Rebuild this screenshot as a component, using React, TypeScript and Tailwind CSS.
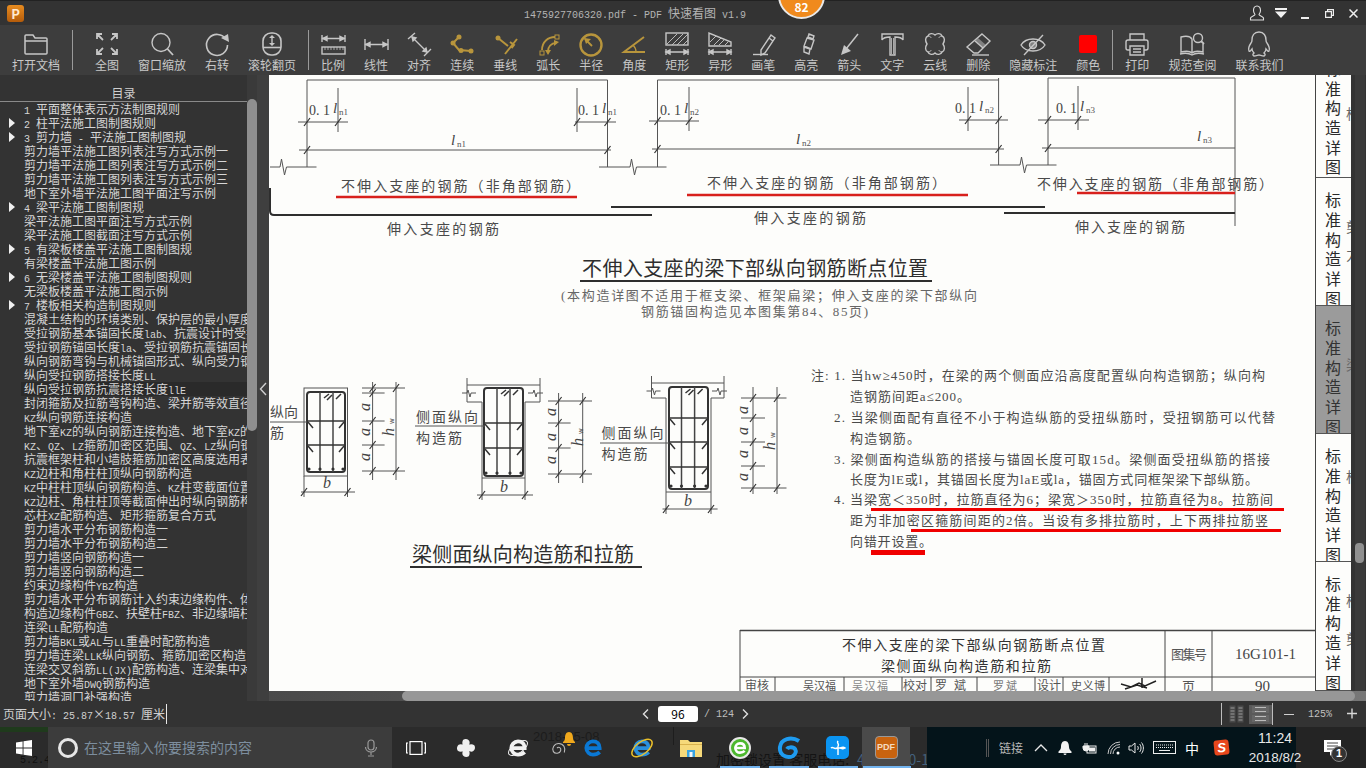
import React from 'react'

const isLatin = /^[\x20-\x7e]+$/

// 界面是 12px 中文 + 6px 宽的西文
const Mixed = ({ text }: { text: string }) => (
  <>
    {text.split(/([\x20-\x7e]+)/).map((s, i) =>
      isLatin.test(s) ? (
        <span key={i} className="font-['Liberation_Mono'] text-[10px]">
          {s}
        </span>
      ) : (
        s
      )
    )}
  </>
)

const Ico = ({ children, gold }: { children: React.ReactNode; gold?: boolean }) => (
  <svg
    viewBox="0 0 28 28"
    fill="none"
    stroke="currentColor"
    strokeWidth={1.4}
    className={`h-7 w-7 shrink-0 ${gold ? 'text-[#b8953c]' : 'text-[#c6c6c6]'}`}
  >
    {children}
  </svg>
)

// 图标比两个字宽，宽度只算文字
const Tool = ({ label, children }: { label: string; children: React.ReactNode }) => (
  <div className="flex flex-col items-center">
    <div className="flex h-7 w-0 justify-center">{children}</div>
    <span className="whitespace-nowrap text-[12px] leading-[13px] text-[#c8c8c8]">{label}</span>
  </div>
)

const Sep = ({ className }: { className: string }) => <div className={`h-10 w-px shrink-0 bg-[#9a9a9a] ${className}`} />

const DimBar = () => (
  <>
    <path d="M3 19v6M25 19v6M3 22h22" />
    <path d="M3 22l4-2v4zM25 22l-4-2v4z" fill="currentColor" />
  </>
)

const hatch = 'M4 14L14 4M9 15L20 4M14 15L25 4M20 15l5-5'

const viewTools = [
  {
    label: '全图',
    icon: (
      <Ico>
        <path strokeWidth={1.8} d="M10 10L4 4M4 9V4h5M18 10l6-6M19 4h5v5M10 18l-6 6M4 19v5h5M18 18l6 6M24 19v5h-5" />
      </Ico>
    ),
  },
  {
    label: '窗口缩放',
    icon: (
      <Ico>
        <circle cx="13" cy="12.5" r="9" />
        <path strokeWidth={1.8} d="M19.5 19l5.5 6" />
      </Ico>
    ),
  },
  {
    label: '右转',
    icon: (
      <Ico>
        <path strokeWidth={1.6} d="M23 9.5A10.5 10.5 0 1 0 24.5 15" />
        <path fill="currentColor" stroke="none" d="M18 8l7-4 1 8z" />
      </Ico>
    ),
  },
  {
    label: '滚轮翻页',
    icon: (
      <Ico>
        <rect x="5" y="3" width="18" height="22" rx="8" strokeWidth={1.6} />
        <path d="M5 17.5h18" strokeWidth={1.6} />
        <path d="M14 7v7" strokeWidth={1.4} />
        <path fill="currentColor" stroke="none" d="M14 5l3 3h-6zM14 16l3-3h-6z" />
      </Ico>
    ),
  },
]

const measureTools = [
  {
    label: '比例',
    icon: (
      <Ico>
        <path d="M3 5v7M26 5v7M3 8.500h23" />
        <path fill="currentColor" d="M4 8.500l4-2v4zM25 8.500l-4-2v4z" />
        <rect x="3" y="17" width="23" height="7" />
        <path d="M6 17v3M9 17v3M12 17v3M15 17v3M18 17v3M21 17v3M24 17v3" strokeWidth={0.8} />
      </Ico>
    ),
  },
  {
    label: '线性',
    icon: (
      <Ico>
        <path d="M3 9v11M26 9v11M3 14.500h23" />
        <path fill="currentColor" d="M4 14.500l4-2v4zM25 14.500l-4-2v4z" />
      </Ico>
    ),
  },
  {
    label: '对齐',
    icon: (
      <Ico>
        <path d="M3 9l7-6M19 26l7-7M7 7l15 15" />
        <path fill="currentColor" d="M7 7l4 1-3 3zM22 22l-4-1 3-3z" />
      </Ico>
    ),
  },
  {
    label: '连续',
    icon: (
      <Ico gold>
        <path strokeWidth={2} d="M11 7l-6 6 6 7 12 1" />
        <circle cx="11" cy="7" r="2.500" fill="currentColor" stroke="none" />
        <circle cx="5" cy="13" r="2.500" fill="currentColor" stroke="none" />
        <circle cx="13" cy="20.500" r="2.500" fill="currentColor" stroke="none" />
        <circle cx="23" cy="21" r="2.500" fill="currentColor" stroke="none" />
      </Ico>
    ),
  },
  {
    label: '垂线',
    icon: (
      <Ico gold>
        <path strokeWidth={2} d="M7 8l10 8M26 9L14 24M19 12l4 3-2.500 3" />
        <circle cx="7" cy="8" r="2.500" fill="currentColor" stroke="none" />
      </Ico>
    ),
  },
  {
    label: '弧长',
    icon: (
      <Ico gold>
        <path strokeWidth={1.8} d="M8 20C8 12 14 7 21 7M14 21c0-4 3-8 8-8" />
        <rect x="21" y="5" width="4" height="4" strokeWidth={1} />
        <rect x="6" y="21" width="4" height="4" strokeWidth={1} />
        <path fill="currentColor" stroke="none" d="M25 12l-5 4v-6zM11 20l6 0-3 5z" />
      </Ico>
    ),
  },
  {
    label: '半径',
    icon: (
      <Ico gold>
        <circle cx="14" cy="15" r="10.500" strokeWidth={2.400} />
        <path strokeWidth={1.8} d="M15 16L8 9" />
        <path fill="currentColor" stroke="none" d="M7 8l7 1-5 5z" />
      </Ico>
    ),
  },
  {
    label: '角度',
    icon: (
      <Ico gold>
        <path strokeWidth={2} d="M24 7L4 22h21" />
        <path strokeWidth={1.4} d="M13 15c2 2 3 4 3 7" />
      </Ico>
    ),
  },
  {
    label: '矩形',
    icon: (
      <Ico>
        <rect x="3" y="3" width="22" height="12" />
        <path d={hatch} strokeWidth={0.9} />
        <DimBar />
      </Ico>
    ),
  },
  {
    label: '异形',
    icon: (
      <Ico>
        <path d="M3 3v13h22v-4z" />
        <path d="M4 12l6-6M8 15l7-7M13 15l5-5M19 15l3-3" strokeWidth={0.9} />
        <DimBar />
      </Ico>
    ),
  },
  {
    label: '画笔',
    icon: (
      <Ico>
        <path d="M22 5l4 3-10 15-4 2v-5zM20 8l4 3" />
        <path d="M4 24.500h15" />
      </Ico>
    ),
  },
  {
    label: '高亮',
    icon: (
      <Ico>
        <path d="M17 4l5 2-1 3-5-2zM15 8l7 2-3 9-7-3zM12 17l6 2-1 5-5-2z" />
      </Ico>
    ),
  },
  {
    label: '箭头',
    icon: (
      <Ico>
        <path d="M23 4L11 19" strokeWidth={1.5} />
        <path fill="currentColor" stroke="none" d="M6 25l3-10 7 6z" />
      </Ico>
    ),
  },
  {
    label: '文字',
    icon: (
      <Ico>
        <path d="M4 4h21v6c-1-2-3-3-8-3v18h-5V7c-5 0-7 1-8 3z" />
        <path d="M13.500 8v16M15.500 8v16" strokeWidth={0.8} />
      </Ico>
    ),
  },
  {
    label: '云线',
    icon: (
      <Ico>
        <path d="M7 6c1-3 5-3 7-1 2-2 6-2 7 1 3 1 3 5 1 8 2 3 2 7-1 8-1 3-5 3-7 1-2 2-6 2-7-1-3-1-3-5-1-8-2-3-2-7 1-8z" />
        <path d="M7 6c2 0 3 1 3 2M21 6c-2 0-3 1-3 2M7 22c2 0 3-1 3-2M21 22c-2 0-3-1-3-2" strokeWidth={0.9} />
      </Ico>
    ),
  },
  {
    label: '删除',
    icon: (
      <Ico>
        <path d="M18 4l8 7-12 12-4 0-7-6z" />
        <path d="M11 11l8 7" />
        <path d="M14 8l8 7-3 3-8-7z" fill="currentColor" fillOpacity={0.5} stroke="none" />
        <path d="M8 25h17" />
      </Ico>
    ),
  },
  {
    label: '隐藏标注',
    icon: (
      <Ico>
        <path d="M2 15c5-8 19-8 24 0-5 8-19 8-24 0z" />
        <circle cx="14" cy="15" r="3.500" fill="currentColor" fillOpacity={0.5} />
        <path d="M24 5L5 25" />
      </Ico>
    ),
  },
  {
    label: '颜色',
    icon: (
      <svg viewBox="0 0 28 28" className="h-7 w-7 shrink-0">
        <rect x="5" y="5" width="18" height="18" rx="2" fill="#ff0000" />
      </svg>
    ),
  },
]

const helpTools = [
  {
    label: '打印',
    icon: (
      <Ico>
        <path d="M7 10V4h14v6" />
        <path d="M7 20H5a2 2 0 0 1-2-2v-6a2 2 0 0 1 2-2h18a2 2 0 0 1 2 2v6a2 2 0 0 1-2 2h-2" />
        <path d="M7 16h14v9H7zM10 19h8M10 22h8" />
      </Ico>
    ),
  },
  {
    label: '规范查阅',
    icon: (
      <Ico>
        <path d="M14 9c-2-3-7-3-11-2v15c4-1 9-1 11 1 2-2 7-2 11-1V14M14 9v14" />
        <path d="M2 24c4-1 9-1 12 1 3-2 8-2 12-1" />
        <circle cx="20" cy="8" r="4.500" />
        <path d="M23 11l3 3" strokeWidth={1.8} />
      </Ico>
    ),
  },
  {
    label: '联系我们',
    icon: (
      <Ico>
        <path d="M14 2c-5 0-7 4-7 8 0 2 0 2-1 3-2 3-3 6-2 8 1 1 2-1 3-2 0 2 1 3 2 4-1 1-2 2 0 3 2 0 4-1 5-1s3 1 5 1c2-1 1-2 0-3 1-1 2-2 2-4 1 1 2 3 3 2 1-2 0-5-2-8-1-1-1-1-1-3 0-4-2-8-7-8z" />
      </Ico>
    ),
  },
]

const tocRows: { t: string; arrow?: boolean; active?: boolean }[] = [
  { t: '1 平面整体表示方法制图规则' },
  { t: '2 柱平法施工图制图规则', arrow: true },
  { t: '3 剪力墙 - 平法施工图制图规', arrow: true },
  { t: '剪力墙平法施工图列表注写方式示例一' },
  { t: '剪力墙平法施工图列表注写方式示例二' },
  { t: '剪力墙平法施工图列表注写方式示例三' },
  { t: '地下室外墙平法施工图平面注写示例' },
  { t: '4 梁平法施工图制图规', arrow: true },
  { t: '梁平法施工图平面注写方式示例' },
  { t: '梁平法施工图截面注写方式示例' },
  { t: '5 有梁板楼盖平法施工图制图规', arrow: true },
  { t: '有梁楼盖平法施工图示例' },
  { t: '6 无梁楼盖平法施工图制图规则', arrow: true },
  { t: '无梁板楼盖平法施工图示例' },
  { t: '7 楼板相关构造制图规则', arrow: true },
  { t: '混凝土结构的环境类别、保护层的最小厚度' },
  { t: '受拉钢筋基本锚固长度lab、抗震设计时受拉钢筋' },
  { t: '受拉钢筋锚固长度la、受拉钢筋抗震锚固长度' },
  { t: '纵向钢筋弯钩与机械锚固形式、纵向受力钢筋' },
  { t: '纵向受拉钢筋搭接长度LL' },
  { t: '纵向受拉钢筋抗震搭接长度llE', active: true },
  { t: '封闭箍筋及拉筋弯钩构造、梁并筋等效直径' },
  { t: 'KZ纵向钢筋连接构造' },
  { t: '地下室KZ的纵向钢筋连接构造、地下室KZ的' },
  { t: 'KZ、QZ、LZ箍筋加密区范围、QZ、LZ纵向钢筋' },
  { t: '抗震框架柱和小墙肢箍筋加密区高度选用表' },
  { t: 'KZ边柱和角柱柱顶纵向钢筋构造' },
  { t: 'KZ中柱柱顶纵向钢筋构造、KZ柱变截面位置' },
  { t: 'KZ边柱、角柱柱顶等截面伸出时纵向钢筋构造' },
  { t: '芯柱XZ配筋构造、矩形箍筋复合方式' },
  { t: '剪力墙水平分布钢筋构造一' },
  { t: '剪力墙水平分布钢筋构造二' },
  { t: '剪力墙竖向钢筋构造一' },
  { t: '剪力墙竖向钢筋构造二' },
  { t: '约束边缘构件YBZ构造' },
  { t: '剪力墙水平分布钢筋计入约束边缘构件、体积' },
  { t: '构造边缘构件GBZ、扶壁柱FBZ、非边缘暗柱' },
  { t: '连梁LL配筋构造' },
  { t: '剪力墙BKL或AL与LL重叠时配筋构造' },
  { t: '剪力墙连梁LLK纵向钢筋、箍筋加密区构造' },
  { t: '连梁交叉斜筋LL(JX)配筋构造、连梁集中对' },
  { t: '地下室外墙DWQ钢筋构造' },
  { t: '剪力墙洞口补强构造' },
]

/* ---------- 扫描页（图纸）---------- */

const PAGE_FONT = "'Liberation Serif','Noto Sans CJK SC',serif"

const T = ({
  x,
  y,
  w,
  s = 13,
  fill = '#4a4a4a',
  children,
}: {
  x: number
  y: number
  w?: number
  s?: number
  fill?: string
  children: React.ReactNode
}) => (
  <text x={x} y={y + s * 0.36} fontSize={s} fill={fill} stroke="none" fontFamily={PAGE_FONT} textLength={w} lengthAdjust={w ? 'spacing' : undefined}>
    {children}
  </text>
)

const I = ({ x, y, s = 14, rot, children }: { x: number; y: number; s?: number; rot?: boolean; children: React.ReactNode }) => (
  <text
    x={x}
    y={y}
    fontSize={s}
    fill="#444"
    stroke="none"
    fontStyle="italic"
    textAnchor="middle"
    dominantBaseline="middle"
    fontFamily="'Liberation Serif',serif"
    transform={rot ? `rotate(-90 ${x} ${y})` : undefined}
  >
    {children}
  </text>
)

const Tick = ({ x, y }: { x: number; y: number }) => <line x1={x - 3} y1={y + 4} x2={x + 3} y2={y - 4} stroke="#333" strokeWidth={1.2} />

const Ln = ({ x, y, sub }: { x: number; y: number; sub: string }) => (
  <>
    <I x={x} y={y} s={15}>
      l
    </I>
    <text x={x + 4} y={y + 5} fontSize={9} fill="#555" fontFamily="'Liberation Serif',serif">
      {sub}
    </text>
  </>
)

const PointOne = ({ x, y, sub }: { x: number; y: number; sub: string }) => (
  <>
    <text x={x} y={y + 5} fontSize={14} fill="#444" fontFamily="'Liberation Serif',serif">
      0. 1
    </text>
    <Ln x={x + 26} y={y} sub={sub} />
  </>
)

type SectionProps = {
  outer: number[]
  tie: number[]
  bars: number[]
  rows: number[]
  flange?: { l: number; r: number; top: number; bottom: number }
  dim: { a: number; b: number; l: number; r: number; top: number; end: number; long: number[]; short: number[] }
  as: { x: number; ys: number[] }
  hw: { x: number; y: number }
  bMark: { x: number; y: number; line: number; x0: number; x1: number }
}

const BeamSection = ({ outer, tie, bars, rows, flange, dim, as, hw, bMark }: SectionProps) => {
  const [x0, y0, x1, y1] = outer
  const [tx0, ty0, tx1, ty1] = tie
  return (
    <g fill="none" stroke="#555" strokeWidth={1}>
      {flange ? (
        <>
          <path d={`M${flange.l} ${flange.top}H${flange.r}`} />
          <path d={`M${flange.l} ${flange.top - 7}V${flange.bottom}H${x0}V${y1}H${x1}V${flange.bottom}H${flange.r}V${flange.top - 7}`} />
          <path d={`M${flange.l - 5} ${flange.top + 8}h5l1-3 2 7 1-4h5M${flange.r - 12} ${flange.top + 8}h5l1-3 2 7 1-4h6`} />
        </>
      ) : (
        <rect x={x0} y={y0} width={x1 - x0} height={y1 - y0} />
      )}
      <rect x={tx0} y={ty0} width={tx1 - tx0} height={ty1 - ty0} rx={3} stroke="#333" strokeWidth={2} />
      {bars.map((b) => (
        <path key={b} d={`M${b} ${ty0}V${ty1}`} stroke="#444" strokeWidth={1.5} />
      ))}
      {rows.map((r) => (
        <g key={r} stroke="#333">
          <path d={`M${tx0} ${r}H${tx1}`} strokeWidth={1.5} />
          <path d={`M${tx0 + 1} ${r + 1}l5 6M${tx1 - 1} ${r + 1}l-5 6`} strokeWidth={1.5} />
        </g>
      ))}
      <path d={`M${bars[0] + 4} ${ty0 + 6}l5-4M${bars[0] + 7} ${ty0 + 8}l5-5M${bars[1] + 3} ${ty0 + 7}l5-5`} stroke="#333" strokeWidth={1.5} />
      {[tx0 + 2, bars[0], bars[1], tx1 - 2].map((d) => (
        <circle key={d} cx={d} cy={ty1 - 3} r={1.6} fill="#333" stroke="none" />
      ))}
      <path d={`M${dim.a} ${dim.top}V${dim.end}M${dim.b} ${dim.top}V${dim.end}`} />
      {dim.long.map((y) => (
        <g key={y}>
          <path d={`M${dim.l} ${y}H${dim.r}`} />
          <Tick x={dim.a} y={y} />
          <Tick x={dim.b} y={y} />
        </g>
      ))}
      {dim.short.map((y) => (
        <g key={y}>
          <path d={`M${dim.l} ${y}H${dim.a + 12}`} />
          <Tick x={dim.a} y={y} />
        </g>
      ))}
      {as.ys.map((y) => (
        <I key={y} x={as.x} y={y} rot s={16}>
          a
        </I>
      ))}
      <I x={hw.x} y={hw.y} rot s={16}>
        h
      </I>
      <text x={hw.x + 4} y={hw.y - 8} fontSize={7} fill="#444" stroke="none" transform={`rotate(-90 ${hw.x + 4} ${hw.y - 8})`}>
        w
      </text>
      <path d={`M${bMark.x0} ${bMark.line}H${bMark.x1}M${x0} ${y1}V${bMark.line + 5}M${x1} ${y1}V${bMark.line + 5}`} />
      <Tick x={x0} y={bMark.line} />
      <Tick x={x1} y={bMark.line} />
      <I x={bMark.x} y={bMark.y} s={16}>
        b
      </I>
    </g>
  )
}

const hLines = [
  [307, 607.5, 80],
  [657.5, 998.6, 80],
  [1048, 1235, 78],
  [298, 348, 122],
  [575, 616, 122],
  [649, 699, 121],
  [959, 1008, 120],
  [1038, 1089, 120],
  [299, 611, 150],
  [652, 1004, 149],
  [1042, 1235, 148],
]

const vLines = [
  [307, 80, 167],
  [607.5, 80, 167],
  [657.5, 80, 167],
  [998.6, 78, 165],
  [1048, 78, 165],
  [1235, 78, 226],
  [338, 88, 132],
  [577, 88, 132],
  [689, 87, 131],
  [968, 87, 131],
  [1078, 86, 130],
]

const ticks = [
  [307, 122],
  [338, 122],
  [577, 122],
  [607.5, 122],
  [657.5, 121],
  [689, 121],
  [968, 120],
  [998.6, 120],
  [1048, 120],
  [1078, 120],
  [307, 150],
  [607.5, 150],
  [657.5, 149],
  [998.6, 149],
  [1048, 148],
]

const notes: [number, number, number, string][] = [
  [811, 375, 454, '注: 1. 当hw≥450时，在梁的两个侧面应沿高度配置纵向构造钢筋；纵向构'],
  [850, 396, 120, '造钢筋间距a≤200。'],
  [834, 417, 441, '2. 当梁侧面配有直径不小于构造纵筋的受扭纵筋时，受扭钢筋可以代替'],
  [850, 438, 70, '构造钢筋。'],
  [834, 459, 436, '3. 梁侧面构造纵筋的搭接与锚固长度可取15d。梁侧面受扭纵筋的搭接'],
  [850, 479, 408, '长度为lE或l，其锚固长度为laE或la，锚固方式同框架梁下部纵筋。'],
  [834, 499, 439, '4. 当梁宽＜350时，拉筋直径为6；梁宽＞350时，拉筋直径为8。拉筋间'],
  [850, 520, 418, '距为非加密区箍筋间距的2倍。当设有多排拉筋时，上下两排拉筋竖'],
  [850, 541, 82, '向错开设置。'],
]

const PageDrawing = () => (
  <svg viewBox="269 75 1046 616" className="block h-[616px] w-[1046px] shrink-0 bg-[#fdfdfb]">
    <g stroke="#555" strokeWidth={1} fill="none">
      {hLines.map(([a, b, y], i) => (
        <path key={i} d={`M${a} ${y}H${b}`} />
      ))}
      {vLines.map(([x, a, b], i) => (
        <path key={i} d={`M${x} ${a}V${b}`} />
      ))}
      <path d="M270 167h10l1.500-8 3 16 2-8h30M599 167h31l1.500-8 3 16 2-8h30M990 165h30l1.500-8 3 16 2-8h30" />
    </g>
    {ticks.map(([x, y], i) => (
      <Tick key={i} x={x} y={y} />
    ))}
    <PointOne x={309} y={110} sub="n1" />
    <PointOne x={578} y={110} sub="n1" />
    <PointOne x={660} y={110} sub="n2" />
    <PointOne x={955} y={108} sub="n2" />
    <PointOne x={1056} y={108} sub="n3" />
    <Ln x={453} y={142} sub="n1" />
    <Ln x={798} y={141} sub="n2" />
    <Ln x={1199} y={138} sub="n3" />

    <T x={341} y={186} s={14} w={239}>不伸入支座的钢筋（非角部钢筋）</T>
    <T x={707} y={183} s={14} w={239}>不伸入支座的钢筋（非角部钢筋）</T>
    <T x={1037} y={184} s={14} w={236}>不伸入支座的钢筋（非角部钢筋）</T>
    <g stroke="#d8201c" strokeWidth={2.5}>
      <path d="M336 197H577M687 195H968M1077 193H1235" />
    </g>
    <g stroke="#2e2e2e" strokeWidth={2} fill="none">
      <path d="M270 188V211Q270 215 274 215H652" />
      <path d="M611 207H1045M1004 213H1235" />
    </g>
    <T x={387} y={229} s={14} w={112}>伸入支座的钢筋</T>
    <T x={754} y={218} s={14} w={112}>伸入支座的钢筋</T>
    <T x={1075} y={227} s={14} w={110}>伸入支座的钢筋</T>

    <T x={582} y={269} s={20} w={346} fill="#2e2e2e">不伸入支座的梁下部纵向钢筋断点位置</T>
    <path d="M580 281H932" stroke="#2e2e2e" strokeWidth={2} />
    <T x={561} y={295} w={416} fill="#666">(本构造详图不适用于框支梁、框架扁梁；伸入支座的梁下部纵向</T>
    <T x={641} y={311} w={227} fill="#666">钢筋锚固构造见本图集第84、85页)</T>

    <BeamSection
      outer={[304, 388, 347.5, 476]}
      tie={[307, 392, 345, 472]}
      bars={[320, 333]}
      rows={[421, 445]}
      dim={{ a: 372.6, b: 396, l: 362, r: 405, top: 382, end: 480, long: [388, 471], short: [393, 421, 445] }}
      as={{ x: 366, ys: [407, 432, 457] }}
      hw={{ x: 390, y: 432 }}
      bMark={{ x: 327, y: 484, line: 492, x0: 301, x1: 355 }}
    />
    <T x={270} y={412} w={28} s={14}>纵向</T>
    <T x={270} y={433} s={14}>筋</T>
    <path d="M270 422H307" stroke="#555" />

    <BeamSection
      outer={[482, 402, 525, 478]}
      tie={[484, 388, 523, 476]}
      bars={[497, 510]}
      rows={[423, 448]}
      flange={{ l: 467, r: 540, top: 385, bottom: 402 }}
      dim={{ a: 558.6, b: 582.7, l: 548, r: 592, top: 393, end: 483, long: [401, 474], short: [423, 448] }}
      as={{ x: 552, ys: [412, 437, 460] }}
      hw={{ x: 579, y: 442 }}
      bMark={{ x: 504, y: 488, line: 495, x0: 477, x1: 533 }}
    />
    <T x={416} y={417} w={62} s={14}>侧面纵向</T>
    <T x={416} y={438} w={46} s={14}>构造筋</T>
    <path d="M415 426H485" stroke="#555" />

    <BeamSection
      outer={[666, 398, 711, 492]}
      tie={[669, 387, 708, 489]}
      bars={[681.5, 694.6]}
      rows={[418, 442, 467]}
      flange={{ l: 651.5, r: 724, top: 383, bottom: 398 }}
      dim={{ a: 753, b: 777, l: 741, r: 786.5, top: 387, end: 494, long: [398, 488], short: [418, 442, 466] }}
      as={{ x: 744.5, ys: [410, 431, 454, 477] }}
      hw={{ x: 771, y: 446 }}
      bMark={{ x: 688, y: 502, line: 509, x0: 662.5, x1: 717.6 }}
    />
    <T x={601.6} y={433} w={62} s={14}>侧面纵向</T>
    <T x={601.6} y={454} w={46} s={14}>构造筋</T>
    <path d="M600 443H669" stroke="#555" />

    <T x={412} y={555} s={20} w={222} fill="#2e2e2e">梁侧面纵向构造筋和拉筋</T>
    <path d="M410 567H642" stroke="#2e2e2e" strokeWidth={2} />

    {notes.map(([x, y, w, t]) => (
      <T key={y} x={x} y={y} w={w}>
        {t}
      </T>
    ))}
    <g stroke="#f00000">
      <path d="M871 509.500H1284M911 530.500H1281" strokeWidth={3} />
      <path d="M871 552.500H925" strokeWidth={5} />
    </g>

    <g stroke="#444" fill="none">
      <path d="M740 630.500H1315" strokeWidth={1.5} />
      <path d="M740 677H1315M740 630V691M1165 630V691M1212 630V691" />
      <path d="M775 677V691M844 677V691M902 677V691M931 677V691M977 677V691M1035 677V691M1063 677V691M1109 677V691" />
    </g>
    <T x={842} y={645} s={14} w={263} fill="#333">不伸入支座的梁下部纵向钢筋断点位置</T>
    <T x={881} y={666} s={14} w={170} fill="#333">梁侧面纵向构造筋和拉筋</T>
    <T x={1171} y={654} w={36} fill="#555">图集号</T>
    <T x={1235} y={654} s={15} w={61} fill="#444">16G101-1</T>
    <g>
      <T x={745} y={686} s={12} fill="#555">审核</T>
      <T x={803} y={686} s={11} w={33} fill="#555">吴汉福</T>
      <T x={852} y={686} s={11} w={36} fill="#888">吴汉福</T>
      <T x={903} y={686} s={12} fill="#555">校对</T>
      <T x={935} y={686} s={12} w={31} fill="#555">罗斌</T>
      <T x={993} y={686} s={11} w={24} fill="#777">罗斌</T>
      <T x={1037} y={686} s={12} fill="#555">设计</T>
      <T x={1071} y={686} s={11} w={34} fill="#555">史义博</T>
      <path d="M1121 684l10 3 8-4 6 3 11-5M1125 689l12-4 10 3M1142 678v10" stroke="#222" strokeWidth={1.5} fill="none" />
      <T x={1182} y={686} s={13} fill="#555">页</T>
      <T x={1255} y={686} s={15} fill="#444">90</T>
    </g>
  </svg>
)

/* ---------- 右侧书签 ---------- */

const TabRail = () => {
  const tabs = [
    { h: 'h-[105px]', end: true, ghost: [{ y: 30, c: '构' }] },
    { h: 'h-[130px]', ghost: [{ y: 40, c: '剪' }, { y: 68, c: '力' }] },
    { h: 'h-[130px]', grey: true, ghost: [{ y: 50, c: '梁' }] },
    { h: 'h-[130px]', ghost: [{ y: 34, c: '构' }] },
    { h: 'h-[131px]', ghost: [{ y: 30, c: '构' }, { y: 68, c: '剪' }] },
  ]
  return (
    <div className="flex w-9 shrink-0 flex-col border-l border-[#444]">
      {tabs.map((tab, i) => (
        <div
          key={i}
          className={`relative flex flex-col items-center overflow-hidden border-b border-[#555] pr-px text-[16px] leading-[19.7px] ${tab.h} ${
            tab.end ? 'justify-end' : 'pt-[12px]'
          } ${tab.grey ? 'bg-[#9b9b9b] text-[#333]' : 'bg-[#fdfdfb] text-[#2a2a2a]'}`}
        >
          {'标准构造详图'.split('').map((c, j) => (
            <span key={j} className="block shrink-0">
              {c}
            </span>
          ))}
          {tab.ghost.map((g) => (
            <span key={g.y} className="absolute left-[30px] text-[14px] leading-4 text-[#666]" style={{ top: g.y }}>
              {g.c}
            </span>
          ))}
        </div>
      ))}
    </div>
  )
}

/* ---------- 任务栏图标 ---------- */

const Cell = ({ w, children, active }: { w: string; children: React.ReactNode; active?: boolean }) => (
  <div className={`flex h-full shrink-0 items-center justify-center ${w} ${active ? 'bg-[#4a4a4a]' : ''}`}>{children}</div>
)

const EMark = ({ color, size = 22 }: { color: string; size?: number }) => (
  <svg viewBox="0 0 24 24" width={size} height={size} fill="none" stroke={color} strokeWidth={4.500}>
    <path d="M4 12h16c0-5-3-8-8-8s-8 4-8 8c0 5 4 8 8 8 3 0 6-1 8-3" />
  </svg>
)

export default function App() {
  return (
    <div className="flex h-[768px] w-[1366px] flex-col overflow-hidden bg-[#333] font-['Noto_Sans_CJK_SC',sans-serif] text-[12px]">
      {/* 标题栏 */}
      <div className="relative flex h-[25px] shrink-0 items-center border-t border-[#222] bg-[#333]">
        <div className="ml-[7px] flex h-[17px] w-[17px] items-center justify-center rounded-[3px] bg-gradient-to-b from-[#e88c20] to-[#b55c0a] text-[13px] font-bold leading-none text-[#ffe9cf]">
          P
        </div>
        <div className="ml-[500px] whitespace-pre text-[#b4b4b4]">
          <Mixed text="1475927706320.pdf - PDF 快速看图 v1.9" />
        </div>
        <div className="ml-auto mr-px flex items-center">
          <div className="flex w-6 justify-center">
            <svg viewBox="0 0 16 16" className="h-4 w-4" fill="none" stroke="#ddd" strokeWidth={1.1}>
              <path d="M8 1C5.500 1 4.500 3 4.500 5.500c0 2 1 3 1.500 4 0 1-4 2-4.500 3.500v2h13v-2c-.5-1.500-4.500-2.500-4.500-3.500.5-1 1.500-2 1.500-4C11.500 3 10.500 1 8 1z" />
            </svg>
          </div>
          <div className="flex w-6 justify-center">
            <svg viewBox="0 0 12 10" className="h-[10px] w-3" fill="#f2f2f2">
              <path d="M0 0h12v2H0zM0 3.500h12L6 10z" />
            </svg>
          </div>
          <div className="flex w-6 justify-center pt-[9px]">
            <div className="h-0.5 w-2 bg-[#eee]" />
          </div>
          <div className="flex w-6 justify-center">
            <svg viewBox="0 0 9 9" className="h-[9px] w-[9px]" fill="none" stroke="#eee" strokeWidth={1.200}>
              <path d="M.6 2.600h5.800v5.800H.6zM2.600 2.600V.6h5.800v5.800H6.400" />
            </svg>
          </div>
          <div className="flex w-6 justify-center">
            <svg viewBox="0 0 9 9" className="h-[9px] w-[9px]" fill="none" stroke="#eee" strokeWidth={1.500}>
              <path d="M.5.5l8 8M8.500.5l-8 8" />
            </svg>
          </div>
        </div>
        {/* 角标盖在标题栏上 */}
        <div className="absolute left-[778px] top-[-30px] flex h-[48px] w-[47px] items-end justify-center rounded-full border-2 border-[#e8e8e8] bg-[#f08a1d] pb-[3px] text-[12px] font-bold leading-[14px] text-white">
          82
        </div>
      </div>

      {/* 工具栏 */}
      <div className="flex h-[50px] shrink-0 items-start bg-[#3d3d3d] pl-3 pt-[5px]">
        <Tool label="打开文档">
          <Ico>
            <path strokeWidth={1.5} d="M3 23V6a1 1 0 0 1 1-1h7l2 3h11a1 1 0 0 1 1 1v14a1 1 0 0 1-1 1H4a1 1 0 0 1-1-1zM3 11h22" />
          </Ico>
        </Tool>
        <Sep className="ml-3 mr-[22px]" />
        <div className="flex gap-[19px]">
          {viewTools.map((t) => (
            <Tool key={t.label} label={t.label}>
              {t.icon}
            </Tool>
          ))}
        </div>
        <Sep className="mx-3" />
        <div className="flex gap-[19px]">
          {measureTools.map((t) => (
            <Tool key={t.label} label={t.label}>
              {t.icon}
            </Tool>
          ))}
        </div>
        <Sep className="mx-3" />
        <div className="flex gap-[19px]">
          {helpTools.map((t) => (
            <Tool key={t.label} label={t.label}>
              {t.icon}
            </Tool>
          ))}
        </div>
      </div>

      {/* 主体 */}
      <div className="flex h-[626px] shrink-0">
        <div className="flex w-[247px] shrink-0 flex-col overflow-hidden bg-[#333] text-[#d6d6d6]">
          <div className="h-[27px] shrink-0 border-b border-[#8a8a8a] pt-[11px] text-center leading-[14px] text-[#cfcfcf]">目录</div>
          {tocRows.map((row, i) => (
            <div key={i} className="flex h-[14px] shrink-0 items-center leading-[14px]">
              <div className="flex w-[21px] shrink-0 pl-[9px]">
                {row.arrow && (
                  <svg viewBox="0 0 6 10" className="h-[10px] w-[6px]" fill="#f0f0f0">
                    <path d="M0 0l6 5-6 5z" />
                  </svg>
                )}
              </div>
              <div className={`h-[14px] min-w-0 flex-1 overflow-hidden whitespace-pre pl-[3px] ${row.active ? 'bg-[#2a2a2a]' : ''}`}>
                <Mixed text={row.t} />
              </div>
            </div>
          ))}
        </div>
        <div className="w-[10px] shrink-0 bg-[#3a3a3a] pt-6">
          <div className="h-[332px] w-[10px] rounded-[5px] bg-[#8f8f8f]" />
        </div>
        <div className="w-3 shrink-0 bg-[#3f3f3f] pl-0.5 pt-[307px]">
          <svg viewBox="0 0 8 14" className="h-[14px] w-2" fill="none" stroke="#cfcfcf" strokeWidth={1.4}>
            <path d="M7 1L1.500 7 7 13" />
          </svg>
        </div>
        <div className="flex min-w-0 flex-1 flex-col">
          <div className="flex h-[616px] shrink-0 overflow-hidden">
            <PageDrawing />
            <TabRail />
            <div className="w-[4px] shrink-0 bg-[#333]" />
            <div className="w-[10px] shrink-0 bg-[#3a3a3a] pt-[468px]">
              <div className="h-5 w-[9px] rounded-[4px] bg-[#909090]" />
            </div>
          </div>
          <div className="flex h-[10px] shrink-0 bg-gradient-to-r from-[#4a4a4a] to-[#777]">
            <div className="ml-[133px] h-[10px] w-[953px] rounded-[5px] bg-[#979797]" />
          </div>
        </div>
      </div>

      {/* 状态栏 */}
      <div className="flex h-[26px] shrink-0 items-center bg-[#333] text-[#d0d0d0]">
        <div className="flex w-[640px] shrink-0 items-center whitespace-pre pl-[3px]">
          <span>
            <Mixed text="页面大小: 25.87×18.57 厘米" />
          </span>
          <span className="ml-px h-[20px] w-px bg-[#e8e8e8]" />
        </div>
        <svg viewBox="0 0 12 12" className="h-3 w-3 shrink-0" fill="none" stroke="#e0e0e0" strokeWidth={1.4}>
          <path d="M8 1.500L3.500 6 8 10.500" />
        </svg>
        <div className="ml-[6px] flex h-4 w-10 shrink-0 items-center justify-center rounded-[3px] bg-white text-black">96</div>
        <span className="ml-[6px] w-[29px] shrink-0 whitespace-pre font-['Liberation_Mono'] text-[10px] text-[#bdbdbd]">/ 124</span>
        <svg viewBox="0 0 12 12" className="ml-[6px] h-3 w-3 shrink-0" fill="none" stroke="#e0e0e0" strokeWidth={1.4}>
          <path d="M4 1.500L8.500 6 4 10.500" />
        </svg>
        <div className="ml-[470px] h-[22px] w-px shrink-0 bg-[#bdbdbd]" />
        <svg viewBox="0 0 15 18" className="ml-[7px] h-[18px] w-[15px] shrink-0" fill="none" stroke="#9a9a9a">
          <rect x=".5" y=".5" width="6" height="17" fill="#4a4a4a" stroke="none" />
          <rect x="8.500" y=".5" width="6" height="17" fill="#4a4a4a" stroke="none" />
          <path d="M1.500 3h4M1.500 6h4M1.500 9h4M1.500 12h4M1.500 15h4M9.500 3h4M9.500 6h4M9.500 9h4M9.500 12h4M9.500 15h4" />
        </svg>
        <div className="ml-[5px] flex h-[19px] w-[23px] shrink-0 flex-col justify-center gap-[2px] bg-[#5a5a5a] px-[3px]">
          <div className="flex h-[7px] flex-col items-center justify-around bg-[#666]">
            <div className="h-px w-[11px] bg-[#bbb]" />
            <div className="h-px w-[11px] bg-[#bbb]" />
          </div>
          <div className="flex h-[7px] flex-col items-center justify-around bg-[#666]">
            <div className="h-px w-[11px] bg-[#bbb]" />
            <div className="h-px w-[11px] bg-[#bbb]" />
          </div>
        </div>
        <div className="h-[22px] w-px shrink-0 bg-[#bdbdbd]" />
        <div className="flex w-8 shrink-0 justify-center">
          <div className="h-px w-[10px] bg-[#d0d0d0]" />
        </div>
        <span className="ml-[3px] w-[25px] shrink-0 font-['Liberation_Mono'] text-[10px] text-[#c0c0c0]">125%</span>
        <svg viewBox="0 0 16 16" className="ml-[11px] h-4 w-4 shrink-0" fill="none" stroke="#d8d8d8" strokeWidth={1.4}>
          <path d="M8 2.500v10M3 7.500h10" />
        </svg>
      </div>

      {/* 任务栏：半透明，透出后面网页的文字 */}
      <div className="relative flex h-[41px] shrink-0 bg-[#2b2b2b]">
        <div className="absolute left-0 top-0 h-[5px] w-[48px] bg-[#1f3a1c]" />
        <span className="absolute left-[20px] top-[26px] font-['Liberation_Mono'] text-[10px] text-[#111]">5.2.4</span>
        <span className="absolute left-[533px] top-[0px] font-['Liberation_Sans'] text-[13px] text-[#1c1c1c]">2018-05-08</span>
        <span className="absolute left-[716px] top-[23px] whitespace-nowrap text-[14px] leading-[18px] text-[#141414]">
          加密锁设置 客服电话:<span className="ml-2 text-[#44617c]">4000-180-166</span>
        </span>
        <div className="absolute left-[673px] top-0 h-[18px] w-px bg-[#1d1d1d]" />

        <div className="relative flex h-full w-[48px] shrink-0 items-center justify-center">
          <svg viewBox="0 0 16 16" className="h-4 w-4" fill="#fff">
            <path d="M0 2.400L6.600 1.400V7.500H0zM7.500 1.300L16 0V7.500H7.500zM0 8.500H6.600V14.600L0 13.600zM7.500 8.500H16V16L7.500 14.700z" />
          </svg>
        </div>
        <div className="relative flex h-full w-[344px] shrink-0 items-center bg-[#3c3c3c] pl-[10px]">
          <div className="h-5 w-5 shrink-0 rounded-full border-[3px] border-[#e6e6e6]" />
          <span className="ml-[6px] whitespace-nowrap text-[14px] text-[#7d8e9e]">在这里输入你要搜索的内容</span>
          <svg viewBox="0 0 14 18" className="ml-auto mr-[14px] h-[18px] w-[14px]" fill="none" stroke="#999" strokeWidth={1.2}>
            <rect x="4" y="1" width="6" height="10" rx="3" />
            <path d="M1.500 8c0 3 2.500 5 5.500 5s5.500-2 5.500-5M7 13v3M4 17h6" />
          </svg>
        </div>
        <div className="relative flex h-full shrink-0 items-center">
          <Cell w="w-[48px]">
            <svg viewBox="0 0 20 14" className="h-[14px] w-5" fill="none" stroke="#fff" strokeWidth={1.2}>
              <rect x="4" y=".6" width="12" height="12.800" />
              <path d="M2 2H.6v10H2M18 2h1.400v10H18" />
            </svg>
          </Cell>
          <Cell w="w-[52px]">
            <svg viewBox="0 0 24 24" className="h-[22px] w-[22px]" fill="#f0f0f0">
              <path d="M12 12C8 10 7 6 9 3c3-2 7 0 7 3 0 3-2 5-4 6zM12 12c2-4 6-5 9-3 2 3 0 7-3 7-3 0-5-2-6-4zM12 12c4 2 5 6 3 9-3 2-7 0-7-3 0-3 2-5 4-6zM12 12c-2 4-6 5-9 3-2-3 0-7 3-7 3 0 5 2 6 4z" />
            </svg>
          </Cell>
          <Cell w="w-[52px]">
            <div className="relative">
              <EMark color="#f2f2f2" size={20} />
              <svg viewBox="0 0 22 22" className="absolute -left-px -top-px h-[22px] w-[22px]" fill="none" stroke="#f2f2f2" strokeWidth={1}>
                <ellipse cx="11" cy="11" rx="11" ry="5" transform="rotate(-35 11 11)" />
              </svg>
            </div>
          </Cell>
          <div className="relative flex h-full w-6 shrink-0 items-center justify-center">
            <svg viewBox="0 0 22 22" className="absolute left-[3px] top-[11px] h-[20px] w-[20px]" fill="none" stroke="#bcbcbc" strokeWidth={1.2}>
              <path d="M11 11c2-2 5 0 4 3-1 3-6 4-8 1-2-4 1-9 6-9 5 0 8 5 6 10" />
            </svg>
            <svg viewBox="0 0 14 14" className="absolute left-[18px] top-[5px] h-[14px] w-[14px]" fill="#f0a81c">
              <path d="M7 0c3 0 4 3 4 6 0 2 1 3 2 4v1H1v-1c1-1 2-2 2-4 0-3 1-6 4-6zM5 12h4a2 2 0 0 1-4 0z" />
            </svg>
          </div>
          <Cell w="w-[49px]">
            <EMark color="#0a78d4" size={20} />
          </Cell>
          <Cell w="w-[49px]">
            <div className="relative">
              <EMark color="#2a90dc" size={20} />
              <svg viewBox="0 0 24 24" className="absolute -left-0.5 -top-0.5 h-6 w-6" fill="none" stroke="#eabf2a" strokeWidth={1.500}>
                <ellipse cx="12" cy="12" rx="12" ry="6" transform="rotate(-38 12 12)" />
              </svg>
            </div>
          </Cell>
          <Cell w="w-[49px]">
            <svg viewBox="0 0 22 18" className="h-[18px] w-[22px]">
              <path d="M0 1h8l2 2h12v15H0z" fill="#f6d97a" />
              <path d="M0 5h22v1H0z" fill="#d9b24e" />
              <path d="M7 11h8v7H7z" fill="#3aa3e0" />
              <path d="M9.500 13h3v5h-3z" fill="#f6f6f6" />
            </svg>
          </Cell>
          <Cell w="w-[49px]">
            <div className="flex h-[22px] w-[22px] items-center justify-center rounded-full border-2 border-[#e8e8e8] bg-[#4cb82e]">
              <EMark color="#fff" size={14} />
            </div>
          </Cell>
          <Cell w="w-[49px]">
            <svg viewBox="0 0 24 24" className="h-6 w-6" fill="none" stroke="#1e9bf0" strokeWidth={4}>
              <path d="M22 5C14 0 4 3 3 11c-1 8 7 12 13 9 3-2 4-6 1-8-2-1-6-1-7 1" />
            </svg>
          </Cell>
          <Cell w="w-[49px]">
            <div className="flex h-[23px] w-[23px] items-center justify-center rounded-[5px] bg-[#0a94f2]">
              <svg viewBox="0 0 18 18" className="h-4 w-4" fill="none" stroke="#fff" strokeWidth={1.6}>
                <path d="M9 1c-2 3 2 3 0 6v10M1 9c3-2 3 2 7 0h3c3 0 3-2 6 0-3 2-3 0-6 0" />
              </svg>
            </div>
          </Cell>
          <Cell w="w-[48px]" active>
            <div className="flex h-[23px] w-[23px] items-center justify-center rounded-[4px] border border-[#999] bg-[#c8630f] font-['Liberation_Sans'] text-[9px] font-bold leading-none text-[#f4dcc0]">
              PDF
            </div>
          </Cell>
        </div>
        <div className="w-[17px] shrink-0" />

        {/* 系统托盘 */}
        <div className="relative flex h-full flex-1 items-center bg-[linear-gradient(to_right,#04141a_369px,#242424_369px)] pl-[59px] text-[#cfcfcf]">
          <div className="h-[18px] w-[3px] shrink-0 border-x border-[#555]" />
          <span className="ml-[10px] w-[24px] shrink-0 text-[12px] leading-none text-[#b8b8b8]">链接</span>
          <div className="ml-[6px] flex w-6 shrink-0 justify-center">
            <svg viewBox="0 0 14 8" className="h-2 w-[14px]" fill="none" stroke="#e8e8e8" strokeWidth={1.3}>
              <path d="M1 7l6-6 6 6" />
            </svg>
          </div>
          <div className="flex w-6 shrink-0 justify-center">
            <svg viewBox="0 0 14 14" className="h-[14px] w-[14px]" fill="#f2f2f2">
              <path d="M7 0c3 0 4 3 4 6 0 2 1 3 2.500 4.500V12H.5v-1.500C2 9 3 8 3 6c0-3 1-6 4-6zM5.500 12.500h3a1.500 1.500 0 0 1-3 0z" />
            </svg>
          </div>
          <div className="flex w-6 shrink-0 justify-center">
            <svg viewBox="0 0 16 12" className="h-3 w-4" fill="none" stroke="#f0f0f0" strokeWidth={1}>
              <path d="M4 1v3M6 1v3" />
              <path d="M2 4h6v2a3 3 0 0 1-6 0z" fill="#f0f0f0" />
              <rect x="6" y="4" width="9" height="7" />
              <rect x="8" y="5.500" width="6" height="4" fill="#f0f0f0" stroke="none" />
            </svg>
          </div>
          <div className="flex w-[25px] shrink-0 justify-center">
            <svg viewBox="0 0 14 14" className="h-[14px] w-[14px]" fill="none" stroke="#c8c8c8" strokeWidth={1}>
              <path d="M1 13a12 12 0 0 1 12-12M3.500 13a9.500 9.500 0 0 1 9.500-9.500M6 13a7 7 0 0 1 7-7" />
              <circle cx="11" cy="12" r="1.500" fill="#fff" stroke="none" />
            </svg>
          </div>
          <div className="flex w-5 shrink-0 justify-center">
            <svg viewBox="0 0 16 14" className="h-[14px] w-4" fill="none" stroke="#e8e8e8" strokeWidth={1}>
              <path d="M1 5v4h2.500L7 12V2L3.500 5zM9.500 5c1 1 1 3 0 4M11.500 3c2 2 2 6 0 8M13.500 1.500c2.500 3 2.500 8 0 11" />
            </svg>
          </div>
          <div className="flex w-9 shrink-0 justify-center">
            <svg viewBox="0 0 23 13" className="h-[13px] w-[23px]" fill="none" stroke="#eee" strokeWidth={1}>
              <rect x=".5" y=".5" width="22" height="12" />
              <path d="M3 4h17M3 6.500h17" strokeDasharray="1 1" />
              <path d="M6 9.500h11" />
            </svg>
          </div>
          <span className="flex w-5 shrink-0 justify-center text-[14px] leading-none text-white">中</span>
          <div className="flex w-[38px] shrink-0 justify-center">
            <div className="flex h-[15px] w-[15px] -rotate-6 items-center justify-center rounded-[3px] bg-[#e8471c] font-['Liberation_Sans'] text-[13px] font-bold italic leading-none text-white">
              S
            </div>
          </div>
          <div className="flex w-[70px] shrink-0 flex-col items-center font-['Liberation_Sans'] text-[13.5px] leading-[20px] text-[#e8e8e8]">
            <span className="text-[14px]">11:24</span>
            <span>2018/8/2</span>
          </div>
          <div className="relative ml-[14px] h-[16px] w-[17px] shrink-0">
            <svg viewBox="0 0 17 16" className="h-4 w-[17px]">
              <path d="M0 0h17v12H9l-3 4v-4H0z" fill="#fff" />
              <path d="M3 3h11M3 6h11M3 9h7" stroke="#444" />
            </svg>
            <div className="absolute left-[7px] top-[6px] flex h-4 w-4 items-center justify-center rounded-full border border-[#888] bg-[#333] font-['Liberation_Sans'] text-[11px] font-bold leading-none text-white">
              1
            </div>
          </div>
        </div>

        {/* 运行中程序的下划线 */}
        <div className="absolute left-[720px] bottom-0 h-[2px] w-10 bg-[#72b3ee]" />
        <div className="absolute left-[769px] bottom-0 h-[2px] w-10 bg-[#72b3ee]" />
        <div className="absolute left-[818px] bottom-0 h-[2px] w-10 bg-[#72b3ee]" />
        <div className="absolute left-[863px] bottom-0 h-[2px] w-12 bg-[#72b3ee]" />
      </div>
    </div>
  )
}
